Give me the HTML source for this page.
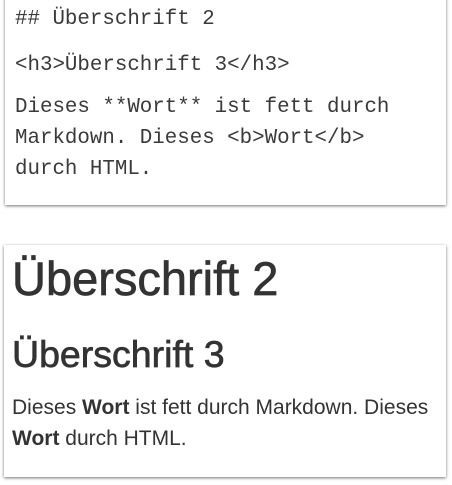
<!DOCTYPE html>
<html><head><meta charset="utf-8"><style>
html,body{margin:0;padding:0;background:#fff;width:452px;height:485px;overflow:hidden;position:relative}
.box{position:absolute;background:#fff;box-shadow:0 1px 3px rgba(0,0,0,.55);}
#a{left:5px;top:-4px;width:441px;height:209px}
#b{left:4px;top:245px;width:442px;height:232px}
.m{position:absolute;left:15px;font-family:"Liberation Mono",monospace;font-size:20.8px;color:#3a3a3a;white-space:pre;line-height:31px}
.s{position:absolute;left:12px;font-family:"Liberation Sans",sans-serif;color:#333;white-space:pre}
.h{-webkit-text-stroke:0.7px #333}
</style></head><body>
<div class="box" id="a"></div>
<div class="box" id="b"></div>
<div class="m" style="top:4px">## Überschrift 2</div>
<div class="m" style="top:50px">&lt;h3&gt;Überschrift 3&lt;/h3&gt;</div>
<div class="m" style="top:92px">Dieses **Wort** ist fett durch
Markdown. Dieses &lt;b&gt;Wort&lt;/b&gt;
durch HTML.</div>
<div class="s h" style="top:249px;font-size:47px;line-height:60px">Überschrift 2</div>
<div class="s h" style="top:331px;font-size:37.5px;line-height:46px">Überschrift 3</div>
<div class="s" style="top:392px;font-size:21px;line-height:31px">Dieses <b>Wort</b> ist fett durch Markdown. Dieses
<b>Wort</b> durch HTML.</div>
</body></html>
